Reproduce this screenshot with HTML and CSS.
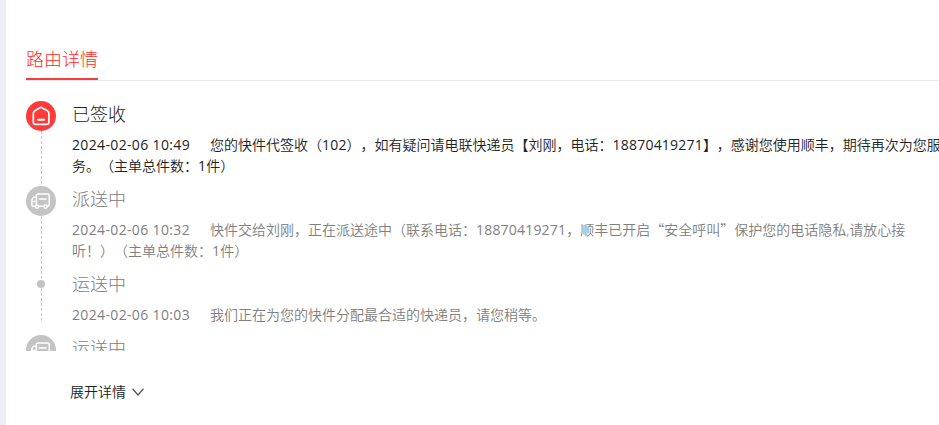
FILE: index.html
```
<!DOCTYPE html>
<html lang="zh-CN">

<head>
    <meta charset="UTF-8">
    <meta name="viewport" content="width=device-width, initial-scale=1.0">
    <title>路由详情</title>
    <link rel="stylesheet" href="styles.css">
</head>

<body>
    <svg class="symbols" width="0" height="0">
        <symbol id="truck" viewBox="0 0 30 30">
            <g fill="none" stroke="#fff" stroke-width="1.5" stroke-linecap="round" stroke-linejoin="round">
                <path d="M8.6 20.2H7.2Q5.9 20.2 5.9 18.9V13.8L7.4 11.2H10.2"></path>
                <path d="M6.2 15.6H8.8"></path>
                <path d="M10.4 18.2V9.8Q10.4 7.9 12.3 7.9H21.4Q23.3 7.9 23.3 9.9V18.2Q23.3 20 21.6 20.2M12.8 20.2H17.6"></path>
                <path d="M13.5 13.1H20"></path>
                <circle cx="10.9" cy="20.6" r="1.7"></circle>
                <circle cx="19.6" cy="20.6" r="1.7"></circle>
            </g>
        </symbol>
    </svg>
    <div class="page">
        <div class="tabs">
            <div class="tab">路由详情</div>
        </div>
        <ul class="route">
            <li class="item active">
                <div class="axis">
                    <div class="icon">
                        <svg width="30" height="30" viewBox="0 0 30 30">
                            <path d="M13.6 6.9Q15 6 16.4 6.9L21.3 9.7Q22.9 10.7 22.9 12.4V21Q22.9 23.4 20.5 23.4H9.7Q7.3 23.4 7.3 21V12.4Q7.3 10.7 8.9 9.7Z" fill="none" stroke="#fff" stroke-width="1.7"></path>
                            <path d="M12 18.7H18.2" stroke="#fff" stroke-width="2" stroke-linecap="round"></path>
                        </svg>
                    </div>
                    <div class="line"></div>
                </div>
                <div class="info">
                    <div class="title">已签收</div>
                    <div class="desc"><span class="time">2024-02-06 10:49</span>您的快件代签收（<span class="num">102</span>），如有疑问请电联快递员【刘刚，电话：<span class="num">18870419271</span>】，感谢您使用顺丰，期待再次为您服务。（主单总件数：<span class="num">1</span>件）</div>
                </div>
            </li>
            <li class="item">
                <div class="axis">
                    <div class="icon">
                        <svg width="30" height="30"><use href="#truck"></use></svg>
                    </div>
                    <div class="line"></div>
                </div>
                <div class="info">
                    <div class="title">派送中</div>
                    <div class="desc"><span class="time">2024-02-06 10:32</span>快件交给刘刚，正在派送途中（联系电话：<span class="num">18870419271</span>，顺丰已开启<span class="quote">“</span>安全呼叫<span class="quote">”</span>保护您的电话隐私,请放心接听！）（主单总件数：<span class="num">1</span>件）</div>
                </div>
            </li>
            <li class="item last">
                <div class="axis">
                    <div class="line short"></div>
                    <div class="dot"></div>
                    <div class="line"></div>
                </div>
                <div class="info">
                    <div class="title">运送中</div>
                    <div class="desc"><span class="time">2024-02-06 10:03</span>我们正在为您的快件分配最合适的快递员，请您稍等。</div>
                </div>
            </li>
            <li class="item">
                <div class="axis">
                    <div class="icon">
                        <svg width="30" height="30"><use href="#truck"></use></svg>
                    </div>
                </div>
                <div class="info">
                    <div class="title">运送中</div>
                </div>
            </li>
        </ul>
        <div class="more">
            <span>展开详情</span>
            <svg width="16" height="16" viewBox="0 0 16 16">
                <path d="M2.6 4.8L8 11L13.4 4.8" fill="none" stroke="#555" stroke-width="1.3"></path>
            </svg>
        </div>
    </div>
</body>

</html>
```

FILE: styles.css
```
* {
    margin: 0;
    padding: 0;
    box-sizing: border-box;
}

body {
    background-color: #eff0f5;
    font-family: "Open Sans", "Noto Sans CJK SC", sans-serif;
    font-size: 14px;
    font-weight: 350;
    color: #222;
    text-spacing-trim: space-all;
    overflow: hidden;
}

.symbols {
    display: block;
}

.page {
    width: 960px;
    height: 425px;
    margin-left: 6px;
    padding: 38px 20px 0;
    background-color: #fff;
}

.tabs {
    display: flex;
    height: 43px;
    border-bottom: 1px solid #e8e8e8;
}

.tab {
    height: 42px;
    line-height: 42px;
    font-size: 18px;
    font-weight: 300;
    color: #ff2a2a;
    border-bottom: 2px solid #ff3a3a;
}

.route {
    height: 270px;
    padding-top: 20px;
    list-style: none;
    overflow: hidden;
}

.item {
    display: flex;
    gap: 16px;
    color: #808080;
}

.axis {
    display: flex;
    flex-direction: column;
    align-items: center;
    width: 30px;
}

.icon {
    width: 30px;
    height: 30px;
    border-radius: 50%;
    background-color: #c4c4c4;
}

.icon svg {
    display: block;
}

.line {
    flex: 1;
    width: 1px;
    background: repeating-linear-gradient(#ccc 0 3px, transparent 3px 5px);
}

.short {
    flex: none;
    height: 9px;
}

.dot {
    width: 8px;
    height: 8px;
    border-radius: 50%;
    background-color: #c4c4c4;
}

.info {
    width: 874px;
    padding-bottom: 10px;
}

.title {
    height: 26px;
    line-height: 26px;
    margin-bottom: 7px;
    font-size: 18px;
    font-weight: 300;
}

.desc {
    line-height: 21px;
}

.active {
    color: #222;
}

.active .icon {
    background-color: #ff3a3a;
}

.last .axis {
    margin-bottom: 14px;
}

.time {
    margin-right: 20px;
    font-weight: 400;
    letter-spacing: 0.35px;
}

.num {
    font-weight: 400;
    letter-spacing: 0.2px;
}

.quote {
    font-family: "Noto Sans CJK SC", sans-serif;
}

.more {
    display: flex;
    align-items: center;
    gap: 4px;
    margin: 31px 0 0 44px;
    line-height: 20px;
}
```
